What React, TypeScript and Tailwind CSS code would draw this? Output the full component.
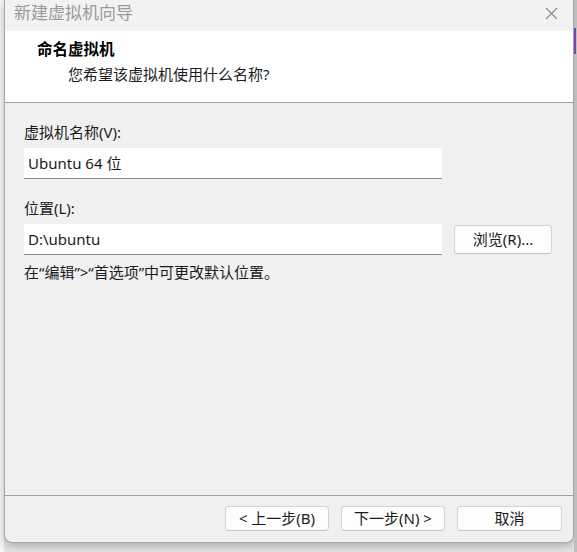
import React from "react";

const font = "font-['Noto_Sans','Noto_Sans_CJK_SC',sans-serif]";

const Button: React.FC<{ label: string; className?: string }> = ({ label, className }) => (
  <button
    type="button"
    className={`flex h-[25px] items-center justify-center rounded-[4px] border border-[#d3d3d3] border-b-[#c2c2c2] bg-[#fdfdfd] text-[15px] leading-none text-[#1b1b1b] ${className ?? ""}`}
  >
    {label}
  </button>
);

const Field: React.FC<{ value: string }> = ({ value }) => (
  <div className="flex h-[31px] w-[418px] items-center border-b border-[#8c8c8c] bg-white px-[4px] text-[15px] text-[#1b1b1b]">
    {value}
  </div>
);

export default function App() {
  return (
    <div className={`flex h-[552px] w-[577px] overflow-hidden bg-[#e4e4e4] ${font}`}>
      <div className="h-full w-[4px] bg-[#f6f6f6]" />

      <div className="flex h-[543px] w-[570px] flex-col overflow-hidden rounded-b-[8px] border border-t-0 border-[#a6a6a6] bg-[#f0f0f0] shadow-[0_3px_8px_rgba(0,0,0,0.25)]">
        {/* title bar */}
        <div className="flex h-[31px] items-start justify-between bg-[#f2f2f2] pl-[9px] pr-[15px] pt-[3px]">
          <span className="text-[17px] leading-[20px] text-[#9a9a9a]">新建虚拟机向导</span>
          <svg width="13" height="13" viewBox="0 0 13 13" className="mt-[4px]">
            <path d="M1 1L12 12M12 1L1 12" stroke="#8a8a8a" strokeWidth="1.1" />
          </svg>
        </div>

        {/* header */}
        <div className="flex h-[72px] flex-col border-b border-[#a0a0a0] bg-white pl-[32px] pt-[7px]">
          <span className="text-[15.5px] font-bold leading-[22px] text-black">命名虚拟机</span>
          <span className="ml-[31px] mt-[3px] text-[15px] leading-[22px] text-[#1b1b1b]">
            您希望该虚拟机使用什么名称?
          </span>
        </div>

        {/* body */}
        <div className="flex flex-1 flex-col px-[19px] pt-[19px] text-[15px] leading-[20px] text-[#1b1b1b]">
          <span>虚拟机名称(V):</span>
          <div className="mt-[6px]">
            <Field value="Ubuntu 64 位" />
          </div>
          <span className="mt-[19px]">位置(L):</span>
          <div className="mt-[6px] flex items-center gap-[12px]">
            <Field value="D:\ubuntu" />
            <Button label="浏览(R)..." className="h-[29px] w-[98px]" />
          </div>
          <span className="mt-[7px]">在“编辑”&gt;“首选项”中可更改默认位置。</span>
        </div>

        {/* footer */}
        <div className="flex h-[47px] items-start justify-end gap-[12px] border-t border-[#a0a0a0] pr-[11px] pt-[10px]">
          <Button label="< 上一步(B)" className="w-[104px]" />
          <Button label="下一步(N) >" className="w-[104px]" />
          <Button label="取消" className="w-[105px]" />
        </div>
      </div>

      <div className="flex h-full w-[3px] flex-col bg-[#bdbdbd]">
        <div className="mt-[28px] h-[26px] w-[2px] bg-[#7a3fb0]" />
      </div>
    </div>
  );
}
